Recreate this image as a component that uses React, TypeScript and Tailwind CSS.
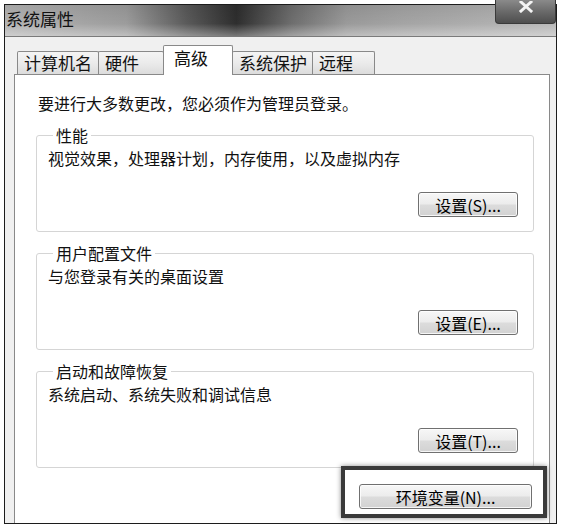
import React from 'react';

// Grayscale Win7 "系统属性" dialog, 高级 tab, with the env-vars button highlighted
const FONT = "font-['Noto_Sans_CJK_SC','Noto_Sans',sans-serif]";

const tabs = [
  { label: '计算机名', w: 'w-[82px]' },
  { label: '硬件', w: 'w-[66px]' },
  { label: '高级', w: 'w-[70px]', active: true },
  { label: '系统保护', w: 'w-[81px]' },
  { label: '远程', w: 'w-[63px]' },
];

const WinButton: React.FC<{ label: string; className?: string }> = ({ label, className }) => (
  <button
    className={`h-[25px] rounded-[3px] border border-[#707070] bg-[linear-gradient(180deg,#f7f7f7_0%,#ececec_48%,#dcdcdc_52%,#d2d2d2_100%)] shadow-[inset_0_0_0_1px_rgba(255,255,255,0.8)] text-[16px] leading-[22px] text-black ${className ?? ''}`}
  >
    {label}
  </button>
);

const Group: React.FC<{ title: string; desc: string; btn: string; className?: string }> = ({
  title,
  desc,
  btn,
  className,
}) => (
  <fieldset className={`ml-[21px] mr-[15px] border border-[#d5d5d5] rounded-[3px] pl-[11px] pr-[15px] pb-[14px] ${className ?? ''}`}>
    <legend className="ml-[5px] px-[3px] text-[16px] leading-[18px]">{title}</legend>
    <p className="text-[16px] leading-[20px] mt-[4px]">{desc}</p>
    <div className="flex justify-end mt-[24px]">
      <WinButton label={btn} className="w-[100px]" />
    </div>
  </fieldset>
);

export default function App() {
  return (
    <div className={`w-[561px] h-[529px] bg-white overflow-hidden relative text-[#111] ${FONT}`}>
      <div className="ml-[4px] mt-[4px] w-[553px] h-[520px] border border-[#1c1c1c] flex flex-col bg-[#f0f0f0]">
        {/* title bar */}
        <div className="h-[32px] shrink-0 border-b border-[#7a7a7a] bg-[linear-gradient(90deg,#b4b4b4_0%,#9c9c9c_22%,#5a5a5a_33%,#2e2e2e_42%,#6e6e6e_52%,#9a9a9a_62%,#a4a4a4_72%,#b8b8b8_100%)] flex items-start">
          <div className="w-full h-full bg-[linear-gradient(180deg,rgba(0,0,0,0.08)_0%,rgba(255,255,255,0)_60%,rgba(255,255,255,0.35)_100%)] pl-[1px] pt-[3px] text-[17px] leading-[22px] text-[#111]">
            系统属性
          </div>
        </div>

        {/* body */}
        <div className="flex-1 flex flex-col pl-[9px] pr-[6px] pt-[8px]">
          <div className="h-[29px] flex items-end pl-[3px] relative z-10">
            {tabs.map((t) =>
              t.active ? (
                <div
                  key={t.label}
                  className={`${t.w} h-[30px] -mb-px -ml-px border border-b-0 border-[#898989] bg-white text-[17px] leading-[24px] pl-[10px] rounded-t-[2px]`}
                >
                  {t.label}
                </div>
              ) : (
                <div
                  key={t.label}
                  className={`${t.w} h-[23px] -ml-px first:ml-0 border border-b-0 border-[#898989] bg-[linear-gradient(180deg,#f4f4f4_0%,#ebebeb_50%,#dcdcdc_100%)] text-[17px] leading-[22px] pl-[6px] rounded-t-[2px]`}
                >
                  {t.label}
                </div>
              ),
            )}
          </div>

          <div className="flex-1 border border-b-0 border-[#898989] bg-white pt-[18px] flex flex-col">
            <p className="pl-[23px] text-[16px] leading-[20px]">要进行大多数更改，您必须作为管理员登录。</p>
            <Group className="mt-[13px]" title="性能" desc="视觉效果，处理器计划，内存使用，以及虚拟内存" btn="设置(S)..." />
            <Group className="mt-[12px]" title="用户配置文件" desc="与您登录有关的桌面设置" btn="设置(E)..." />
            <Group className="mt-[12px]" title="启动和故障恢复" desc="系统启动、系统失败和调试信息" btn="设置(T)..." />
            <div className="flex justify-end mr-[2px] -mt-[2px]">
              <div className="border-[4px] border-[#3a3a3a] shadow-[0_0_5px_rgba(0,0,0,0.45)] pl-[14px] pr-[11px] pt-[14px] pb-[5px]">
                <WinButton label="环境变量(N)..." className="w-[173px]" />
              </div>
            </div>
          </div>
        </div>
      </div>

      {/* close button sits over the title bar */}
      <div className="absolute left-[495px] top-0 w-[61px] h-[24px] rounded-b-[4px] border border-t-0 border-[#3a3a3a] bg-[linear-gradient(180deg,#8a8a8a_0%,#6a6a6a_50%,#4e4e4e_100%)] flex justify-center">
        <svg width="16" height="12" viewBox="0 0 16 12" className="mt-[1px]">
          <path d="M3 1 L13 10 M13 1 L3 10" stroke="#f4f4f4" strokeWidth="3" strokeLinecap="square" />
        </svg>
      </div>
    </div>
  );
}
